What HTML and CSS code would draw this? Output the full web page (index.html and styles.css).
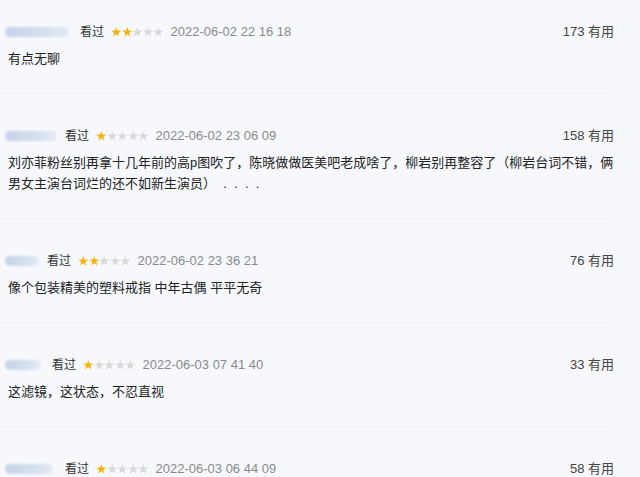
FILE: index.html
```html
<!DOCTYPE html>
<html lang="zh-CN">
<head>
    <meta charset="UTF-8">
    <meta name="viewport" content="width=device-width, initial-scale=1.0">
    <title>短评</title>
    <link rel="stylesheet" href="styles.css">
</head>
<body>
    <svg class="defs" width="0" height="0">
        <symbol id="star" viewBox="0 0 10 10">
            <polygon points="5,0 6.18,3.38 9.76,3.46 6.9,5.62 7.94,9.05 5,7 2.06,9.05 3.1,5.62 0.24,3.46 3.82,3.38"/>
        </symbol>
    </svg>

    <ul class="comments">
        <li class="comment">
            <div class="meta">
                <span class="user u1"></span>
                <span class="watched">看过</span>
                <span class="stars">
                    <svg class="star on"><use href="#star"/></svg><svg class="star on"><use href="#star"/></svg><svg class="star"><use href="#star"/></svg><svg class="star"><use href="#star"/></svg><svg class="star"><use href="#star"/></svg>
                </span>
                <span class="time">2022-06-02 22 16 18</span>
                <span class="votes">173 有用</span>
            </div>
            <p class="text">有点无聊</p>
        </li>

        <li class="comment">
            <div class="meta">
                <span class="user u2"></span>
                <span class="watched">看过</span>
                <span class="stars">
                    <svg class="star on"><use href="#star"/></svg><svg class="star"><use href="#star"/></svg><svg class="star"><use href="#star"/></svg><svg class="star"><use href="#star"/></svg><svg class="star"><use href="#star"/></svg>
                </span>
                <span class="time">2022-06-02 23 06 09</span>
                <span class="votes">158 有用</span>
            </div>
            <p class="text">刘亦菲粉丝别再拿十几年前的高p图吹了，陈晓做做医美吧老成啥了，柳岩别再整容了（柳岩台词不错，俩男女主演台词烂的还不如新生演员）&nbsp;&nbsp;.&nbsp;&nbsp;.&nbsp;&nbsp;.&nbsp;&nbsp;.</p>
        </li>

        <li class="comment">
            <div class="meta">
                <span class="user u3"></span>
                <span class="watched">看过</span>
                <span class="stars">
                    <svg class="star on"><use href="#star"/></svg><svg class="star on"><use href="#star"/></svg><svg class="star"><use href="#star"/></svg><svg class="star"><use href="#star"/></svg><svg class="star"><use href="#star"/></svg>
                </span>
                <span class="time">2022-06-02 23 36 21</span>
                <span class="votes">76 有用</span>
            </div>
            <p class="text">像个包装精美的塑料戒指 中年古偶 平平无奇</p>
        </li>

        <li class="comment">
            <div class="meta">
                <span class="user u4"></span>
                <span class="watched">看过</span>
                <span class="stars">
                    <svg class="star on"><use href="#star"/></svg><svg class="star"><use href="#star"/></svg><svg class="star"><use href="#star"/></svg><svg class="star"><use href="#star"/></svg><svg class="star"><use href="#star"/></svg>
                </span>
                <span class="time">2022-06-03 07 41 40</span>
                <span class="votes">33 有用</span>
            </div>
            <p class="text">这滤镜，这状态，不忍直视</p>
        </li>

        <li class="comment">
            <div class="meta">
                <span class="user u5"></span>
                <span class="watched">看过</span>
                <span class="stars">
                    <svg class="star on"><use href="#star"/></svg><svg class="star"><use href="#star"/></svg><svg class="star"><use href="#star"/></svg><svg class="star"><use href="#star"/></svg><svg class="star"><use href="#star"/></svg>
                </span>
                <span class="time">2022-06-03 06 44 09</span>
                <span class="votes">58 有用</span>
            </div>
        </li>
    </ul>
</body>
</html>
```

FILE: styles.css
```css
body { margin: 0; background: #f6f8fc; font-family: "Liberation Sans", "Noto Sans CJK SC", sans-serif; font-size: 13px; color: #222; overflow: hidden; }
.defs { position: absolute; }

.comments { list-style: none; margin: 0; padding: 0; width: 614px; }
.comment { padding: 32px 0 24px 8px; border-bottom: 1px solid #edf0f5; }
.comment:first-child { padding-top: 22px; }

.meta { display: flex; align-items: center; height: 20px; line-height: 20px; }
.user { height: 10px; margin-left: -3px; border-radius: 5px; background: linear-gradient(90deg, #c6d3e7, #d8e1ef 70%, #e5ebf4); filter: blur(1.2px); }
.u1 { width: 64px; margin-right: 11px; }
.u2 { width: 52px; margin-right: 8px; }
.u3 { width: 34px; margin-right: 8px; }
.u4 { width: 36px; margin-right: 11px; }
.u5 { width: 48px; margin-right: 12px; }

.watched { font-size: 12px; color: #333; margin-right: 7px; }
.stars { display: flex; margin-right: 7px; }
.star { width: 10.5px; height: 10.5px; fill: #d9d9d9; }
.star.on { fill: #f5b30c; }
.time { color: #8a8a8a; }
.votes { margin-left: auto; color: #444; }

.text { margin: 6px 0 0; line-height: 21px; }
```
